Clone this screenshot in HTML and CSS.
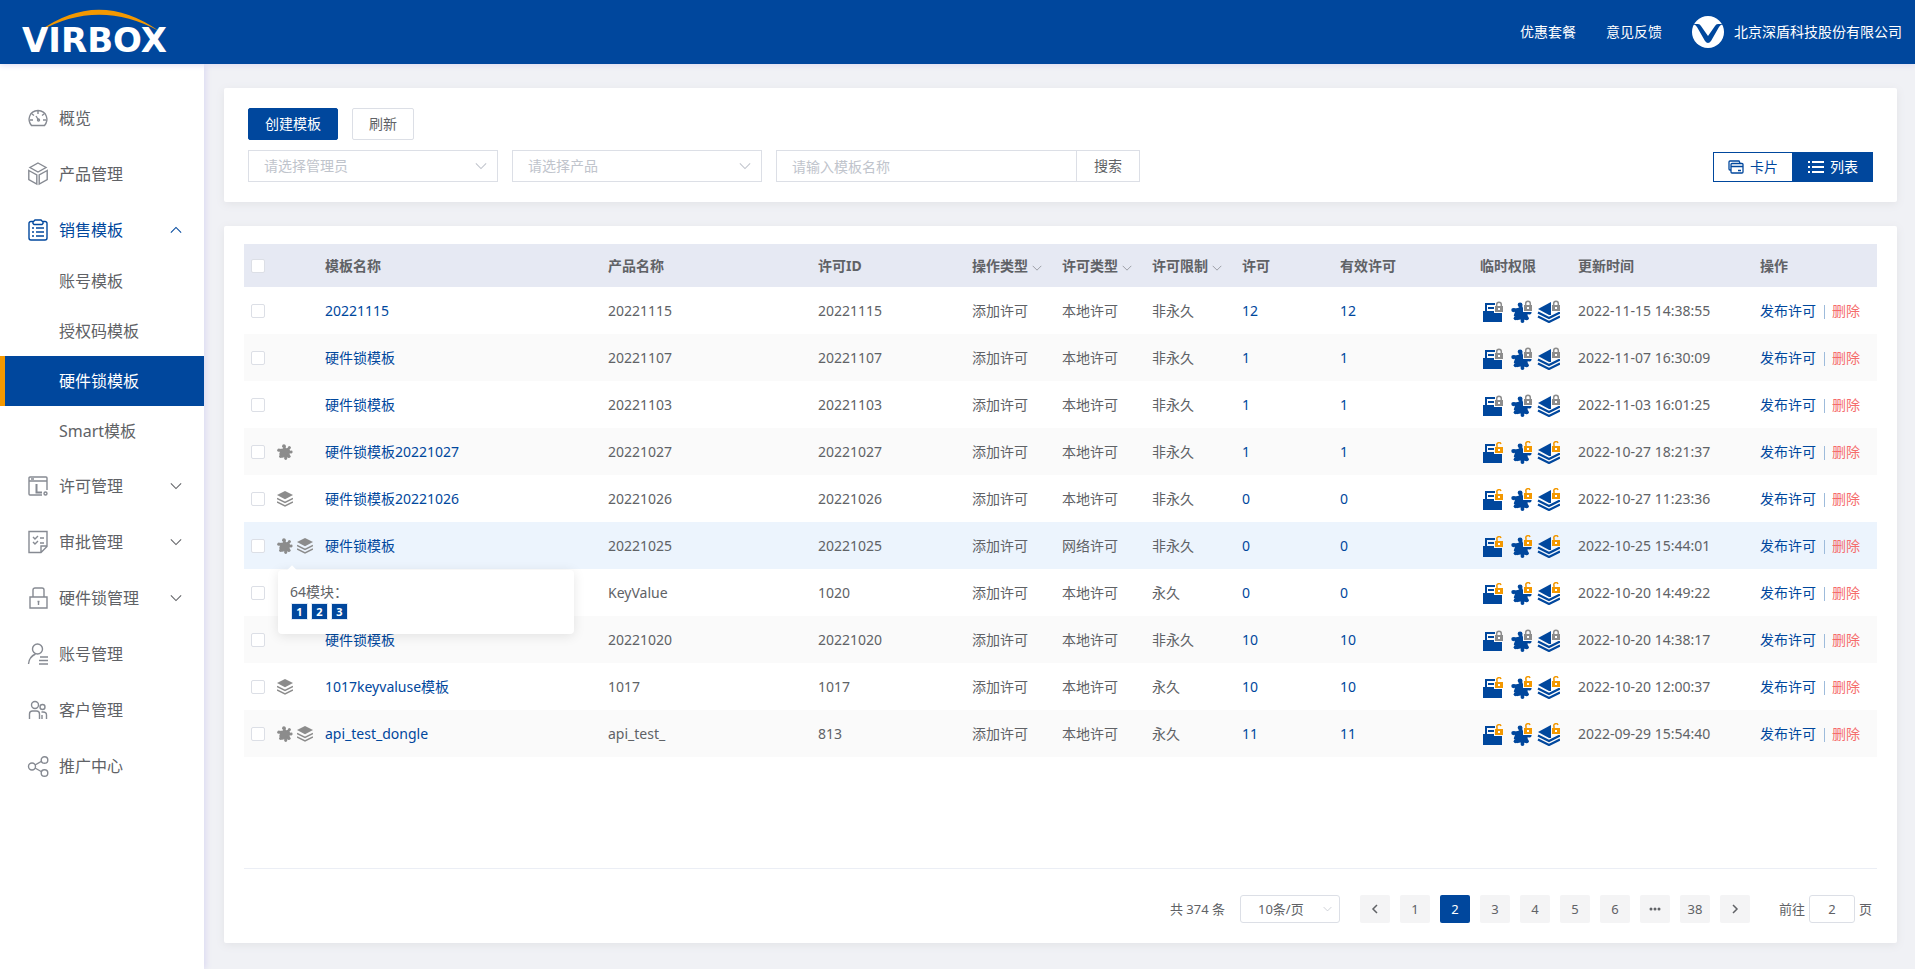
FILE: index.html
```html
<!DOCTYPE html>
<html lang="zh-CN">

<head>
    <meta charset="UTF-8">
    <title>硬件锁模板</title>
    <link rel="stylesheet" href="styles.css">
</head>

<body>
    <svg class="sprite" aria-hidden="true">
        <symbol id="down" viewBox="0 0 14 8"><path d="M1 1l6 6 6-6" fill="none" stroke="currentColor" stroke-width="1.200" /></symbol>
        <symbol id="puzzle" viewBox="0 0 22 22">
            <path d="M4 8l4-1 2-1 2 1 4-1 1 4-1 2 1 5-4 1-2-1-4 1-1-3-2-1 1-3z" fill="currentColor" stroke="currentColor" stroke-width="2" stroke-linejoin="round" />
            <path d="M11 8L10 2M14 8l4-4M15 12l5-1M14 15l3 3M11 15l1 5M8 15l-3 2M7 9L3 8" stroke="currentColor" stroke-width="3" />
            <g fill="currentColor"><circle cx="9.500" cy="3" r="2.500" /><circle cx="17" cy="5" r="2" /><circle cx="19.500" cy="11" r="2" /><circle cx="16.500" cy="17" r="2.200" /><circle cx="12" cy="20" r="2" /><circle cx="5" cy="17" r="2.200" /><circle cx="2.500" cy="8.500" r="2.200" /></g>
        </symbol>
        <symbol id="layers" viewBox="0 0 16 16">
            <path d="M8 0l8 4-8 4.300L0 4z" fill="currentColor" />
            <path d="M0 7.500l8 4 8-4M0 11l8 4 8-4" fill="none" stroke="currentColor" stroke-width="1.500" />
        </symbol>
        <!-- file, puzzle and layers, under their locks -->
        <symbol id="perm" viewBox="0 0 80 24">
            <path d="M3 12h2V4h10v2H7v6h15v11H3z" fill="#00479d" />
            <path d="M8 9h7" stroke="#00479d" stroke-width="2" />
            <use href="#puzzle" x="31" y="3" width="21" height="21" color="#00479d" />
            <path d="M58 10l13-7v13h-2z" fill="#00479d" />
            <path d="M58 13.500l11 5.500 11-5.500M58 17.500l11 5.500 11-5.500" fill="none" stroke="#00479d" stroke-width="2.200" />
        </symbol>
        <symbol id="lock" viewBox="0 0 10 12">
            <path d="M0 4h1V0h8v4h1v8H0z" fill="var(--row)" />
            <path d="M2.700 6V3.500a2.300 2.300 0 0 1 4.600 0V6" fill="none" stroke="#8c8c8c" stroke-width="1.500" />
            <path d="M1 5h8v6H1z" fill="#8c8c8c" /><path d="M4 7h2v2H4z" fill="#fff" />
        </symbol>
        <symbol id="unlock" viewBox="0 0 10 12">
            <path d="M0 4h1V0h8v4h1v8H0z" fill="var(--row)" />
            <path d="M3 6V3.500a2 2 0 0 1 4-1.500" fill="none" stroke="#f39800" stroke-width="1.500" />
            <path d="M1 5h8v6H1z" fill="#f39800" /><path d="M4 7h2v2H4z" fill="#fff" />
        </symbol>
        <symbol id="perm-off" viewBox="0 0 80 24">
            <use href="#perm" width="80" height="24" />
            <use href="#lock" x="14" y="2" width="10" height="12" /><use href="#lock" x="43" y="1" width="10" height="12" /><use href="#lock" x="71" y="1" width="10" height="12" />
        </symbol>
        <symbol id="perm-on" viewBox="0 0 80 24">
            <use href="#perm" width="80" height="24" />
            <use href="#unlock" x="14" y="2" width="10" height="12" /><use href="#unlock" x="43" y="1" width="10" height="12" /><use href="#unlock" x="71" y="1" width="10" height="12" />
        </symbol>
    </svg>

    <header class="header">
        <a class="logo" href="#">
            <svg width="156" height="64" viewBox="0 0 156 64">
                <path d="M18 32Q78-12 139 31 78-2 18 32z" fill="#f39800" />
                <text x="2" y="52">VIRBOX</text>
            </svg>
        </a>
        <nav class="header-nav">
            <a href="#">优惠套餐</a>
            <a href="#">意见反馈</a>
            <a class="user" href="#">
                <svg width="32" height="32" viewBox="0 0 32 32">
                    <circle cx="16" cy="16" r="16" fill="#fff" />
                    <path d="M1 8h5q2 0 3 2l7 10 7-10q1-2 3-2h5q-3 1-4 3l-8 14q-3 4-6 0L5 11Q4 9 1 8z" fill="#00479d" />
                </svg>
                北京深盾科技股份有限公司
            </a>
        </nav>
    </header>

    <div class="body">
        <aside class="sidebar">
            <a class="item" href="#">
                <svg class="icon" viewBox="0 0 20 20"><path d="M3.500 17.500C-1 12 1 3 10 2.500c9 .500 11 9.500 6.500 15zM10 3v3M4 6l2 1.500M16 6l-2 1.500M2 12h3M15 12h3M8 8l2.500 4" /><circle cx="10.500" cy="12" r="1" /></svg>
                概览
            </a>
            <a class="item" href="#">
                <svg class="icon" viewBox="0 0 20 20"><path d="M10 -1l8 4.500-8 4.500L2 3.500zM.800 6.500l8 4.500v9l-8-4.500zM19.200 6.500l-8 4.500v9l8-4.500z" /></svg>
                产品管理
            </a>
            <a class="item open" href="#">
                <svg class="icon" viewBox="0 0 20 20"><path d="M5 1.500H3a2 2 0 0 0-2 2V18a2 2 0 0 0 2 2h14a2 2 0 0 0 2-2V3.500a2 2 0 0 0-2-2h-2M5 3.500V2l2-2h6l2 2v1.500l-1 1H6zM4 8h2M8 8h8M4 12h2M8 12h8M4 16h2M8 16h8" /></svg>
                销售模板
                <svg class="arrow"><use href="#down" /></svg>
            </a>
            <a class="sub" href="#">账号模板</a>
            <a class="sub" href="#">授权码模板</a>
            <a class="sub active" href="#">硬件锁模板</a>
            <a class="sub" href="#">Smart模板</a>
            <a class="item" href="#">
                <svg class="icon" viewBox="0 0 20 20"><path d="M14 19H2a1 1 0 0 1-1-1V2a1 1 0 0 1 1-1h16a1 1 0 0 1 1 1v12M1 5h18M3 3h3" /><path d="M8.500 8v8.500H14" stroke-width="2" /><circle cx="17.500" cy="17.500" r="1.500" /></svg>
                许可管理
                <svg class="arrow"><use href="#down" /></svg>
            </a>
            <a class="item" href="#">
                <svg class="icon" viewBox="0 0 20 20"><path d="M1-.500v21h12l6-6v-15zM13 20v-6h6M5 5l2 2 3-3M5 10l2 2 3-3M12 6h4M12 11h4" /></svg>
                审批管理
                <svg class="arrow"><use href="#down" /></svg>
            </a>
            <a class="item" href="#">
                <svg class="icon" viewBox="0 0 20 20"><path d="M2 9h17v11H2zM5 9V2a2 2 0 0 1 2-2h7a2 2 0 0 1 2 2v7M10.500 13v4M9.500 13.500h2" /></svg>
                硬件锁管理
                <svg class="arrow"><use href="#down" /></svg>
            </a>
            <a class="item" href="#">
                <svg class="icon" viewBox="0 0 20 20"><circle cx="9.500" cy="5" r="5" /><path d="M.500 20Q1 13 7.500 10M12 13h8M11 16.500h9M11 20h9" /></svg>
                账号管理
            </a>
            <a class="item" href="#">
                <svg class="icon" viewBox="0 0 20 20"><circle cx="7" cy="5" r="3.500" /><circle cx="14.500" cy="7" r="2.500" /><path d="M1.500 19v-5q0-3 3-3h4q3 0 3 3v5M13.500 12H15q3.500 0 3.500 3v4M14 15v4" /></svg>
                客户管理
            </a>
            <a class="item" href="#">
                <svg class="icon" viewBox="0 0 20 20"><circle cx="4" cy="10.500" r="3.500" /><circle cx="16.500" cy="4" r="3.300" /><circle cx="16.500" cy="17" r="3.300" /><path d="M7 9l7-4M7 12l7 4" /></svg>
                推广中心
            </a>
        </aside>

        <main class="main">
            <section class="card toolbar">
                <div class="row">
                    <button class="btn primary" type="button">创建模板</button>
                    <button class="btn" type="button">刷新</button>
                </div>
                <div class="row filters">
                    <div class="select">
                        <select aria-label="请选择管理员"><option>请选择管理员</option></select>
                        <svg><use href="#down" /></svg>
                    </div>
                    <div class="select">
                        <select aria-label="请选择产品"><option>请选择产品</option></select>
                        <svg><use href="#down" /></svg>
                    </div>
                    <div class="search">
                        <input type="text" placeholder="请输入模板名称" aria-label="请输入模板名称">
                        <button type="button">搜索</button>
                    </div>
                    <div class="toggle">
                        <button type="button">
                            <svg width="16" height="14" viewBox="0 0 16 14"><path d="M3 10H2a1 1 0 0 1-1-1V2a1 1 0 0 1 1-1h9l1 2M3 4.500a1 1 0 0 1 1-1h10a1 1 0 0 1 1 1V12a1 1 0 0 1-1 1H4a1 1 0 0 1-1-1zM3 6.500h12M10 10.500h3" fill="none" stroke="currentColor" stroke-width="1.300" /></svg>
                            卡片
                        </button>
                        <button class="on" type="button">
                            <svg width="16" height="14" viewBox="0 0 16 14"><path d="M0 2h2M4 2h12M0 7h2M4 7h12M0 12h2M4 12h12" stroke="currentColor" stroke-width="2" /></svg>
                            列表
                        </button>
                    </div>
                </div>
            </section>

            <section class="card list">
                <div class="table-wrap">
                    <table>
                        <colgroup>
                            <col class="c-check"><col class="c-icons"><col><col class="c-product"><col class="c-id">
                            <col class="c-type"><col class="c-type"><col class="c-type"><col class="c-num"><col class="c-valid">
                            <col class="c-perm"><col class="c-time"><col class="c-action">
                        </colgroup>
                        <thead>
                            <tr>
                                <th><input type="checkbox" aria-label="全选"></th>
                                <th></th>
                                <th>模板名称</th>
                                <th>产品名称</th>
                                <th>许可ID</th>
                                <th>操作类型<svg><use href="#down" /></svg></th>
                                <th>许可类型<svg><use href="#down" /></svg></th>
                                <th>许可限制<svg><use href="#down" /></svg></th>
                                <th>许可</th>
                                <th>有效许可</th>
                                <th>临时权限</th>
                                <th>更新时间</th>
                                <th>操作</th>
                            </tr>
                        </thead>
                        <tbody>
                            <tr>
                                <td><input type="checkbox" aria-label="选择"></td>
                                <td></td>
                                <td><a href="#">20221115</a></td>
                                <td>20221115</td><td>20221115</td>
                                <td>添加许可</td><td>本地许可</td><td>非永久</td>
                                <td><a href="#">12</a></td><td><a href="#">12</a></td>
                                <td><svg class="perm"><use href="#perm-off" /></svg></td>
                                <td>2022-11-15 14:38:55</td>
                                <td><a href="#">发布许可</a><i></i><a class="del" href="#">删除</a></td>
                            </tr>
                            <tr>
                                <td><input type="checkbox" aria-label="选择"></td>
                                <td></td>
                                <td><a href="#">硬件锁模板</a></td>
                                <td>20221107</td><td>20221107</td>
                                <td>添加许可</td><td>本地许可</td><td>非永久</td>
                                <td><a href="#">1</a></td><td><a href="#">1</a></td>
                                <td><svg class="perm"><use href="#perm-off" /></svg></td>
                                <td>2022-11-07 16:30:09</td>
                                <td><a href="#">发布许可</a><i></i><a class="del" href="#">删除</a></td>
                            </tr>
                            <tr>
                                <td><input type="checkbox" aria-label="选择"></td>
                                <td></td>
                                <td><a href="#">硬件锁模板</a></td>
                                <td>20221103</td><td>20221103</td>
                                <td>添加许可</td><td>本地许可</td><td>非永久</td>
                                <td><a href="#">1</a></td><td><a href="#">1</a></td>
                                <td><svg class="perm"><use href="#perm-off" /></svg></td>
                                <td>2022-11-03 16:01:25</td>
                                <td><a href="#">发布许可</a><i></i><a class="del" href="#">删除</a></td>
                            </tr>
                            <tr>
                                <td><input type="checkbox" aria-label="选择"></td>
                                <td><div class="marks"><svg><use href="#puzzle" /></svg></div></td>
                                <td><a href="#">硬件锁模板20221027</a></td>
                                <td>20221027</td><td>20221027</td>
                                <td>添加许可</td><td>本地许可</td><td>非永久</td>
                                <td><a href="#">1</a></td><td><a href="#">1</a></td>
                                <td><svg class="perm"><use href="#perm-on" /></svg></td>
                                <td>2022-10-27 18:21:37</td>
                                <td><a href="#">发布许可</a><i></i><a class="del" href="#">删除</a></td>
                            </tr>
                            <tr>
                                <td><input type="checkbox" aria-label="选择"></td>
                                <td><div class="marks"><svg><use href="#layers" /></svg></div></td>
                                <td><a href="#">硬件锁模板20221026</a></td>
                                <td>20221026</td><td>20221026</td>
                                <td>添加许可</td><td>本地许可</td><td>非永久</td>
                                <td><a href="#">0</a></td><td><a href="#">0</a></td>
                                <td><svg class="perm"><use href="#perm-on" /></svg></td>
                                <td>2022-10-27 11:23:36</td>
                                <td><a href="#">发布许可</a><i></i><a class="del" href="#">删除</a></td>
                            </tr>
                            <tr class="hover">
                                <td><input type="checkbox" aria-label="选择"></td>
                                <td>
                                    <div class="marks">
                                        <svg><use href="#puzzle" /></svg>
                                        <svg><use href="#layers" /></svg>
                                        <div class="popover">
                                            <p>64模块：</p>
                                            <span>1</span><span>2</span><span>3</span>
                                        </div>
                                    </div>
                                </td>
                                <td><a href="#">硬件锁模板</a></td>
                                <td>20221025</td><td>20221025</td>
                                <td>添加许可</td><td>网络许可</td><td>非永久</td>
                                <td><a href="#">0</a></td><td><a href="#">0</a></td>
                                <td><svg class="perm"><use href="#perm-on" /></svg></td>
                                <td>2022-10-25 15:44:01</td>
                                <td><a href="#">发布许可</a><i></i><a class="del" href="#">删除</a></td>
                            </tr>
                            <tr>
                                <td><input type="checkbox" aria-label="选择"></td>
                                <td></td>
                                <td></td>
                                <td>KeyValue</td><td>1020</td>
                                <td>添加许可</td><td>本地许可</td><td>永久</td>
                                <td><a href="#">0</a></td><td><a href="#">0</a></td>
                                <td><svg class="perm"><use href="#perm-on" /></svg></td>
                                <td>2022-10-20 14:49:22</td>
                                <td><a href="#">发布许可</a><i></i><a class="del" href="#">删除</a></td>
                            </tr>
                            <tr>
                                <td><input type="checkbox" aria-label="选择"></td>
                                <td></td>
                                <td><a href="#">硬件锁模板</a></td>
                                <td>20221020</td><td>20221020</td>
                                <td>添加许可</td><td>本地许可</td><td>非永久</td>
                                <td><a href="#">10</a></td><td><a href="#">10</a></td>
                                <td><svg class="perm"><use href="#perm-off" /></svg></td>
                                <td>2022-10-20 14:38:17</td>
                                <td><a href="#">发布许可</a><i></i><a class="del" href="#">删除</a></td>
                            </tr>
                            <tr>
                                <td><input type="checkbox" aria-label="选择"></td>
                                <td><div class="marks"><svg><use href="#layers" /></svg></div></td>
                                <td><a href="#">1017keyvaluse模板</a></td>
                                <td>1017</td><td>1017</td>
                                <td>添加许可</td><td>本地许可</td><td>永久</td>
                                <td><a href="#">10</a></td><td><a href="#">10</a></td>
                                <td><svg class="perm"><use href="#perm-on" /></svg></td>
                                <td>2022-10-20 12:00:37</td>
                                <td><a href="#">发布许可</a><i></i><a class="del" href="#">删除</a></td>
                            </tr>
                            <tr>
                                <td><input type="checkbox" aria-label="选择"></td>
                                <td><div class="marks"><svg><use href="#puzzle" /></svg><svg><use href="#layers" /></svg></div></td>
                                <td><a href="#">api_test_dongle</a></td>
                                <td>api_test_</td><td>813</td>
                                <td>添加许可</td><td>本地许可</td><td>永久</td>
                                <td><a href="#">11</a></td><td><a href="#">11</a></td>
                                <td><svg class="perm"><use href="#perm-on" /></svg></td>
                                <td>2022-09-29 15:54:40</td>
                                <td><a href="#">发布许可</a><i></i><a class="del" href="#">删除</a></td>
                            </tr>
                        </tbody>
                    </table>
                </div>

                <div class="pagination">
                    <span class="total">共 374 条</span>
                    <div class="select small">
                        <select aria-label="每页条数"><option>10条/页</option></select>
                        <svg><use href="#down" /></svg>
                    </div>
                    <div class="pages">
                        <button type="button" aria-label="上一页"><svg width="8" height="12" viewBox="0 0 8 12"><path d="M6 2L2 6l4 4" fill="none" stroke="currentColor" stroke-width="1.500" /></svg></button>
                        <button type="button">1</button>
                        <button class="on" type="button">2</button>
                        <button type="button">3</button>
                        <button type="button">4</button>
                        <button type="button">5</button>
                        <button type="button">6</button>
                        <button type="button" aria-label="更多"><svg width="12" height="4" viewBox="0 0 12 4"><circle cx="2" cy="2" r="1.500" /><circle cx="6" cy="2" r="1.500" /><circle cx="10" cy="2" r="1.500" /></svg></button>
                        <button type="button">38</button>
                        <button type="button" aria-label="下一页"><svg width="8" height="12" viewBox="0 0 8 12"><path d="M2 2l4 4-4 4" fill="none" stroke="currentColor" stroke-width="1.500" /></svg></button>
                    </div>
                    <label class="jump">前往<input type="text" value="2">页</label>
                </div>
            </section>
        </main>
    </div>
</body>

</html>
```
FILE: styles.css
```css
* {
    box-sizing: border-box;
}

body {
    margin: 0;
    min-height: 100vh;
    display: flex;
    flex-direction: column;
    background-color: #f0f1f5;
    color: #606266;
    font: 14px/20px "Noto Sans", "Noto Sans CJK SC", sans-serif;
}

a {
    color: #00479d;
    text-decoration: none;
}

button,
input,
select {
    font: inherit;
    color: inherit;
    margin: 0;
    padding: 0;
    background-color: white;
    border: 1px solid #dcdfe6;
    outline: none;
}

.sprite {
    position: absolute;
    width: 0;
    height: 0;
}

.header {
    position: relative;
    z-index: 2;
    height: 64px;
    padding: 0 13px 0 20px;
    display: flex;
    justify-content: space-between;
    background-color: #00479d;
    box-shadow: 0 1px 6px #dcdaf2;
}

.logo svg {
    display: block;
}

.logo text {
    fill: white;
    font: bold 34px "DejaVu Sans", sans-serif;
}

.header-nav {
    display: flex;
    align-items: center;
    gap: 30px;
}

.header-nav a {
    color: white;
}

.user {
    display: flex;
    align-items: center;
    gap: 10px;
}

.body {
    flex: 1;
    display: flex;
}

.sidebar {
    width: 204px;
    flex: none;
    padding-top: 24px;
    background-color: white;
    box-shadow: 2px 0 6px #dcdaf2;
    font-size: 16px;
}

.item,
.sub {
    display: flex;
    align-items: center;
    color: #606266;
}

.item {
    height: 52px;
    margin-top: 4px;
    padding: 0 22px 0 28px;
    gap: 11px;
}

.icon {
    width: 20px;
    height: 20px;
    overflow: visible;
    fill: none;
    stroke: #868a92;
    stroke-width: 1.4;
}

.arrow {
    width: 12px;
    height: 8px;
    margin-left: auto;
}

.open {
    color: #00479d;
}

.open .icon {
    stroke: #00479d;
}

.open .arrow {
    transform: rotate(180deg);
}

.sub {
    height: 50px;
    padding-left: 59px;
}

.active {
    padding-left: 54px;
    border-left: 5px solid #f39800;
    background-color: #00479d;
    color: white;
}

.main {
    flex: 1;
    min-width: 0;
    display: flex;
    flex-direction: column;
    gap: 24px;
    padding: 24px 18px 26px 20px;
}

.card {
    background-color: white;
    border-radius: 2px;
    box-shadow: 0 2px 8px #e2e3e7;
}

.toolbar {
    display: flex;
    flex-direction: column;
    gap: 10px;
    padding: 20px 24px;
}

.row {
    display: flex;
    gap: 14px;
}

.btn {
    height: 32px;
    padding: 0 16px;
    border-radius: 2px;
}

.primary {
    border-color: #00479d;
    background-color: #00479d;
    color: white;
}

.select {
    position: relative;
    width: 250px;
}

.select select {
    appearance: none;
    width: 100%;
    height: 32px;
    padding: 0 15px;
    color: #c0c4cc;
}

.select svg {
    position: absolute;
    top: 12px;
    right: 11px;
    width: 12px;
    height: 8px;
    color: #c0c4cc;
    pointer-events: none;
}

.search {
    display: flex;
    width: 364px;
}

.search input {
    flex: 1;
    min-width: 0;
    height: 32px;
    padding: 0 15px;
}

.search input::placeholder {
    color: #c0c4cc;
}

.search button {
    width: 64px;
    margin-left: -1px;
}

.toggle {
    display: flex;
    align-self: flex-end;
    margin-left: auto;
}

.toggle button {
    display: flex;
    align-items: center;
    justify-content: center;
    gap: 6px;
    width: 80px;
    height: 30px;
    border-color: #00479d;
    color: #00479d;
}

.toggle .on {
    background-color: #00479d;
    color: white;
}

.list {
    flex: 1;
    display: flex;
    flex-direction: column;
    padding: 18px 20px 20px;
}

.table-wrap {
    flex: 1;
    border-bottom: 1px solid #ebeef5;
}

table {
    width: 100%;
    table-layout: fixed;
    border-collapse: collapse;
}

.c-check {
    width: 26px;
}

.c-icons {
    width: 48px;
}

.c-product {
    width: 210px;
}

.c-id {
    width: 154px;
}

.c-type {
    width: 90px;
}

.c-num,
.c-perm {
    width: 98px;
}

.c-valid {
    width: 140px;
}

.c-time {
    width: 182px;
}

.c-action {
    width: 124px;
}

th,
td {
    height: 47px;
    padding: 0 0 0 7px;
    text-align: left;
    white-space: nowrap;
}

th {
    height: 43px;
    background-color: #e6e9f3;
}

th svg {
    width: 10px;
    height: 6px;
    margin-left: 4px;
    color: #909399;
}

tbody tr {
    --row: white;
    background-color: var(--row);
}

tbody tr:nth-child(even) {
    --row: #fafafa;
}

tbody .hover,
tbody .hover:nth-child(even) {
    --row: #ecf4fd;
}

td i {
    display: inline-block;
    width: 1px;
    height: 14px;
    margin: 0 7px 0 8px;
    vertical-align: middle;
    background-color: #9dbbdb;
}

.del {
    color: #f56c6c;
}

input[type=checkbox] {
    appearance: none;
    display: block;
    width: 14px;
    height: 14px;
    border-radius: 2px;
}

.marks {
    position: relative;
    display: flex;
    gap: 4px;
    color: #8c8c8c;
}

.marks svg {
    width: 16px;
    height: 16px;
}

.perm {
    display: block;
    width: 80px;
    height: 24px;
    overflow: visible;
}

.popover {
    position: absolute;
    z-index: 1;
    top: 32px;
    left: 1px;
    width: 296px;
    height: 64px;
    padding: 12px;
    border-radius: 4px;
    background-color: white;
    box-shadow: 0 2px 12px rgba(0, 0, 0, .1);
    color: #606266;
}

.popover:before {
    content: '';
    position: absolute;
    top: -3px;
    left: 10px;
    width: 8px;
    height: 8px;
    background-color: white;
    transform: rotate(45deg);
}

.popover p {
    margin: 0 0 1px;
}

.popover span {
    float: left;
    width: 17px;
    margin: 0 2px 0 1px;
    border: 1px solid #dfe9f5;
    background-color: #00479d;
    color: white;
    font-size: 11px;
    font-weight: bold;
    line-height: 15px;
    text-align: center;
}

.pagination {
    display: flex;
    align-items: center;
    justify-content: flex-end;
    padding: 26px 5px 0 0;
    font-size: 13px;
}

.small {
    width: 100px;
    margin: 0 20px 0 15px;
}

.small select {
    display: block;
    height: 28px;
    padding: 0 17px;
    border-radius: 3px;
    color: #606266;
}

.small svg {
    top: 11px;
    right: 8px;
    width: 9px;
    height: 6px;
}

.pages {
    display: flex;
    gap: 10px;
}

.pages button {
    display: flex;
    align-items: center;
    justify-content: center;
    width: 30px;
    height: 28px;
    border: 0;
    border-radius: 2px;
    background-color: #f4f4f5;
}

.pages .on {
    background-color: #00479d;
    color: white;
}

.pages circle {
    fill: currentColor;
}

.jump {
    display: flex;
    align-items: center;
    margin-left: 29px;
}

.jump input {
    width: 46px;
    height: 28px;
    margin: 0 4px;
    border-radius: 3px;
    text-align: center;
}
```
